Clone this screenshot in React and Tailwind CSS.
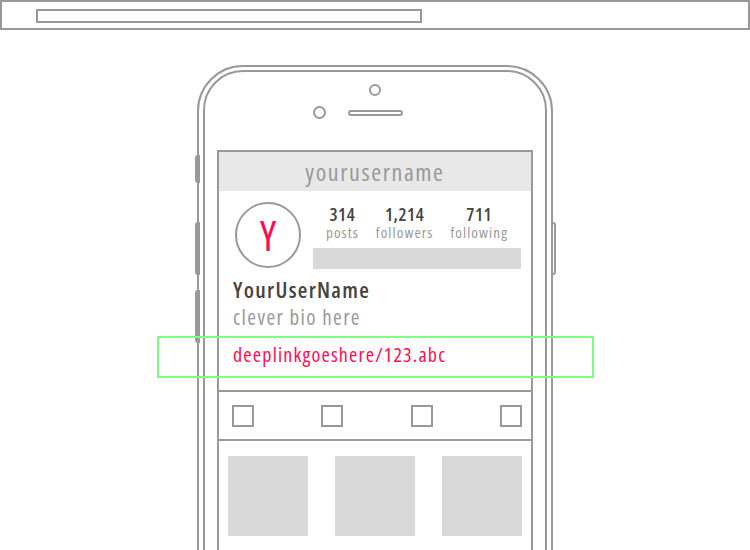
import React from "react";

const FONT = { fontFamily: '"Open Sans", "Noto Sans", sans-serif' };

function SideButton({ className }) {
  return <div className={"absolute w-[5px] border-2 border-[#999] bg-white " + className} />;
}

function Stat({ value, label }) {
  return (
    <div className="flex flex-col items-center">
      <div className="text-[18px] leading-[19px] font-semibold text-[#444] tracking-[0.6px]">{value}</div>
      <div className="text-[15px] leading-[17px] text-[#999] tracking-[1.1px]">{label}</div>
    </div>
  );
}

export default function App() {
  return (
    <div className="relative w-[750px] h-[550px] overflow-hidden bg-white font-stretch-[75%]" style={FONT}>
      {/* top bar */}
      <div className="h-[30px] border-2 border-[#999] pt-[7px] pl-[34px]">
        <div className="w-[386px] h-[14px] border-2 border-[#999]" />
      </div>

      {/* phone */}
      <div className="relative mt-[35px] ml-[197px] w-[356px] h-[600px]">
        <SideButton className="left-[-2px] top-[90px] h-[28px] rounded-l-[3px]" />
        <SideButton className="left-[-2px] top-[157px] h-[53px] rounded-l-[3px]" />
        <SideButton className="left-[-2px] top-[225px] h-[53px] rounded-l-[3px]" />
        <SideButton className="right-[-3px] top-[157px] h-[53px] rounded-r-[3px]" />

        <div className="relative h-full border-2 border-[#999] rounded-t-[46px] pt-[3px] px-[4px]">
          <div className="h-full border-2 border-[#999] rounded-t-[40px] flex flex-col items-center">
            <div className="mt-[12px] w-[12px] h-[12px] rounded-full border-2 border-[#999]" />
            <div className="mt-[10px] flex items-center gap-[22px]">
              <div className="w-[13px] h-[13px] rounded-full border-2 border-[#999]" />
              <div className="w-[55px] h-[6px] rounded-full border-2 border-[#999]" />
              <div className="w-[13px]" />
            </div>

            {/* screen */}
            <div className="mt-[31px] self-stretch mx-[12px] flex-1 border-2 border-b-0 border-[#999]">
              <div className="h-[39px] bg-[#e8e8e8] flex items-center justify-center text-[24px] font-medium text-[#999] tracking-[1.6px]">
                yourusername
              </div>

              <div className="h-[199px] pl-[16px] pr-[9px] pt-[11px]">
                <div className="flex gap-[12px]">
                  <div className="w-[66px] h-[66px] shrink-0 rounded-full border-2 border-[#999] flex items-center justify-center text-[42px] leading-none text-[#ff0a54]">
                    Y
                  </div>
                  <div className="w-[208px] pt-[3px]">
                    <div className="flex justify-center gap-[17px]">
                      <Stat value="314" label="posts" />
                      <Stat value="1,214" label="followers" />
                      <Stat value="711" label="following" />
                    </div>
                    <div className="mt-[7px] h-[21px] bg-[#d9d9d9]" />
                  </div>
                </div>
                <div className="mt-[8px] ml-[-2px] text-[22px] leading-[24px] font-semibold text-[#444] tracking-[1.3px]">
                  YourUserName
                </div>
                <div className="mt-[4px] ml-[-2px] text-[21px] leading-[24px] text-[#999] tracking-[1.4px]">
                  clever bio here
                </div>
                <div className="mt-[14px] ml-[-2px] text-[20px] leading-[24px] text-[#ff0a54] tracking-[1.2px]">
                  deeplinkgoeshere/123.abc
                </div>
              </div>

              <div className="h-[51px] border-y-2 border-[#999] flex items-center justify-between pl-[13px] pr-[9px]">
                <div className="w-[22px] h-[22px] border-2 border-[#999]" />
                <div className="w-[22px] h-[22px] border-2 border-[#999]" />
                <div className="w-[22px] h-[22px] border-2 border-[#999]" />
                <div className="w-[22px] h-[22px] border-2 border-[#999]" />
              </div>

              <div className="pt-[15px] px-[9px] flex gap-[27px]">
                <div className="w-[80px] h-[80px] bg-[#d9d9d9]" />
                <div className="w-[80px] h-[80px] bg-[#d9d9d9]" />
                <div className="w-[80px] h-[80px] bg-[#d9d9d9]" />
              </div>
            </div>
          </div>
        </div>
      </div>

      {/* highlight around link */}
      <div className="absolute left-[157px] top-[336px] w-[437px] h-[42px] border-2 border-[#7dfd7d]" />
    </div>
  );
}
